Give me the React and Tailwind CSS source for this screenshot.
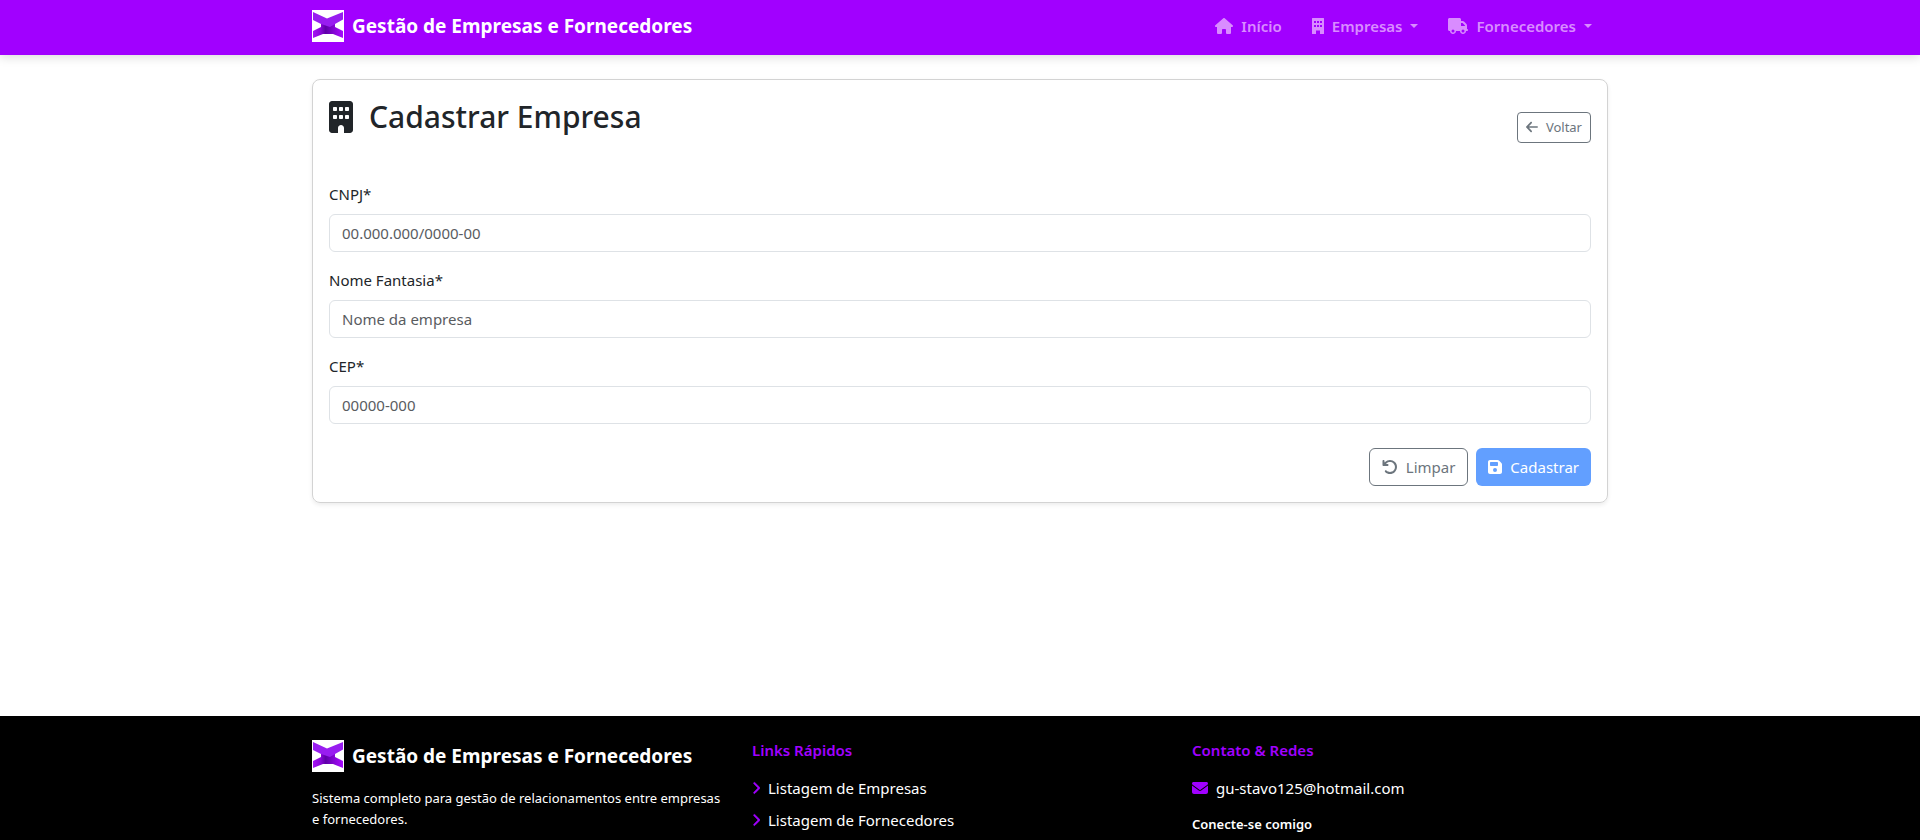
import { FaHouse, FaBuilding, FaTruck, FaArrowLeft, FaArrowRotateLeft, FaFloppyDisk, FaChevronRight, FaEnvelope } from "react-icons/fa6";

function Logo() {
  return (
    <svg viewBox="0 0 32 32" className="size-8 shrink-0" aria-hidden="true">
      <defs>
        <linearGradient id="lower" x1="0" y1="0" x2="1" y2="0">
          <stop offset="0" stopColor="#a512f5" />
          <stop offset="0.25" stopColor="#8a06d8" />
          <stop offset="0.42" stopColor="#5e00a8" />
          <stop offset="0.75" stopColor="#8b06dc" />
          <stop offset="1" stopColor="#a80cff" />
        </linearGradient>
      </defs>
      <rect width="32" height="32" fill="#fff" />
      <path d="M1 28V21L9 17V12H23V17L31 21V28L21 24H11Z" fill="url(#lower)" />
      <path d="M1 2L15 8.500L31 2V9.500L23 14L18 17L9 14L1 10Z" fill="#981df0" />
    </svg>
  );
}

function Brand() {
  return (
    <a href="#" className="flex items-center gap-2 text-[19px]/8 font-bold text-white">
      <Logo />
      Gestão de Empresas e Fornecedores
    </a>
  );
}

function Caret() {
  return <span className="border-x-4 border-t-4 border-x-transparent border-t-current" />;
}

function BuildingGlyph() {
  return (
    <svg viewBox="0 0 12 16" className="h-4 w-3" fill="currentColor" fillRule="evenodd" aria-hidden="true">
      <path d="M.5 0h11a.5.5 0 0 1 .5.5v15a.5.5 0 0 1-.5.5H8v-3.500H4V16H.5a.5.5 0 0 1-.5-.5V.5A.5.5 0 0 1 .5 0ZM2 3v2h2V3ZM5 3v2h2V3ZM8 3v2h2V3ZM2 7v2h2V7ZM5 7v2h2V7ZM8 7v2h2V7Z" />
    </svg>
  );
}

function Field({ id, label, placeholder }) {
  return (
    <div className="mb-4">
      <label htmlFor={id} className="mb-2 block">{label}</label>
      <input
        id={id}
        type="text"
        placeholder={placeholder}
        className="block h-[38px] w-full rounded-md border border-[#dee2e6] px-3 placeholder:text-[#595c5f]"
      />
    </div>
  );
}

export default function App() {
  return (
    <div className="flex min-h-screen flex-col bg-white font-['Noto_Sans',sans-serif] text-[15px]/6 text-[#212529]">
      <header className="bg-[#a100ff] shadow-[0_2px_10px_rgba(0,0,0,0.15)]">
        <div className="mx-auto flex h-[55px] w-full max-w-[1320px] items-center justify-between px-3 pb-[3px]">
          <Brand />
          <nav className="flex gap-[30px] pr-4 font-semibold text-[#d98cff]">
            <a href="#" className="flex items-center gap-2"><FaHouse size={18} />Início</a>
            <button type="button" className="flex items-center gap-2"><BuildingGlyph />Empresas<Caret /></button>
            <button type="button" className="flex items-center gap-2"><FaTruck size={20} />Fornecedores<Caret /></button>
          </nav>
        </div>
      </header>

      <main className="mx-auto w-full max-w-[1320px] flex-1 px-3 pt-6">
        <section className="rounded-lg border border-[#d3d3d3] p-4 shadow-[0_2px_4px_rgba(0,0,0,0.075)]">
          <div className="mb-6 flex items-center justify-between">
            <h1 className="mb-5 flex items-center gap-4 text-[30px]/[42px] font-medium"><FaBuilding size={32} className="w-6" />Cadastrar Empresa</h1>
            <a href="#" className="flex items-center gap-2 rounded border border-[#6c757d] px-2 py-1 text-[13px]/[21px] text-[#6c757d]"><FaArrowLeft className="h-3.5 w-3" />Voltar</a>
          </div>
          <form>
            <Field id="cnpj" label="CNPJ*" placeholder="00.000.000/0000-00" />
            <Field id="nome" label="Nome Fantasia*" placeholder="Nome da empresa" />
            <Field id="cep" label="CEP*" placeholder="00000-000" />
            <div className="mt-6 flex justify-end gap-2">
              <button type="reset" className="flex h-[38px] items-center gap-2 rounded-md border border-[#6c757d] px-3 text-[#6c757d]"><FaArrowRotateLeft size={16} />Limpar</button>
              <button type="submit" className="flex h-[38px] items-center gap-2 rounded-md bg-[#629fff] px-3 text-white"><FaFloppyDisk className="h-4 w-3.5" />Cadastrar</button>
            </div>
          </form>
        </section>
      </main>

      <footer className="bg-black pt-6 pb-1 text-white">
        <div className="mx-auto grid w-full max-w-[1320px] grid-cols-3 gap-6 px-3">
          <div>
            <Brand />
            <p className="mt-4 text-[13px]/[21px]">Sistema completo para gestão de relacionamentos entre empresas e fornecedores.</p>
          </div>
          <div>
            <h2 className="mb-4 leading-5 font-semibold text-[#a100ff]">Links Rápidos</h2>
            <ul className="grid gap-2">
              <li><a href="#" className="flex items-center gap-2"><FaChevronRight className="h-3.5 w-2 stroke-[#a100ff] stroke-[24px] text-[#a100ff]" />Listagem de Empresas</a></li>
              <li><a href="#" className="flex items-center gap-2"><FaChevronRight className="h-3.5 w-2 stroke-[#a100ff] stroke-[24px] text-[#a100ff]" />Listagem de Fornecedores</a></li>
            </ul>
          </div>
          <div>
            <h2 className="mb-4 leading-5 font-semibold text-[#a100ff]">Contato &amp; Redes</h2>
            <a href="mailto:gu-stavo125@hotmail.com" className="flex items-center gap-2"><FaEnvelope size={16} className="text-[#a100ff]" />gu-stavo125@hotmail.com</a>
            <h3 className="mt-3 text-[13px]/6 font-semibold">Conecte-se comigo</h3>
          </div>
        </div>
      </footer>
    </div>
  );
}
